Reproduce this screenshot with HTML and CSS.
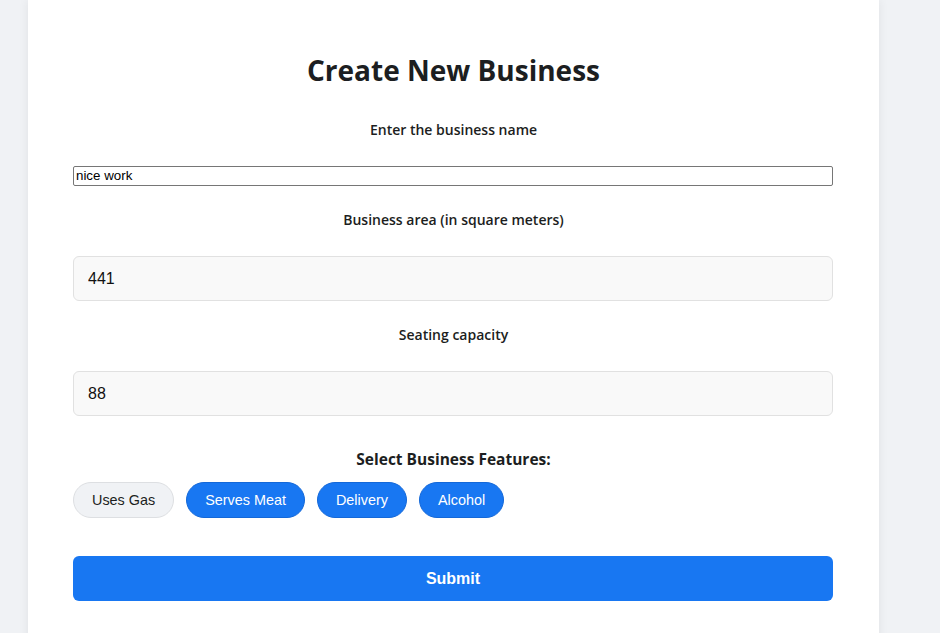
FILE: index.html
```html
<!DOCTYPE html>
<html>
<head>
<meta charset="utf-8">
<link rel="stylesheet" href="styles.css">
</head>
<body>
<div class="page">
  <form class="card">
    <h2 class="title">Create New Business</h2>
    <label class="label">Enter the business name</label>
    <input class="plain-input" type="text" value="nice work">
    <label class="label">Business area (in square meters)</label>
    <input class="field" type="text" value="441">
    <label class="label">Seating capacity</label>
    <input class="field" type="text" value="88">
    <h3 class="features-title">Select Business Features:</h3>
    <div class="chips">
      <button type="button" class="chip">Uses Gas</button>
      <button type="button" class="chip active">Serves Meat</button>
      <button type="button" class="chip active">Delivery</button>
      <button type="button" class="chip active">Alcohol</button>
    </div>
    <button type="button" class="submit">Submit</button>
  </form>
</div>
</body>
</html>
```
FILE: styles.css
```css
html, body {
  margin: 0;
  padding: 0;
  background: #f0f2f5;
  height: 100%;
  overflow: hidden;
}
.page {
  padding-left: 28px;
}
.card {
  width: 851px;
  box-sizing: border-box;
  background: #ffffff;
  box-shadow: 0 0 10px rgba(0, 0, 0, 0.07);
  padding: 53px 45px 40px;
  min-height: 700px;
  display: flex;
  flex-direction: column;
  font-family: "Open Sans", "Noto Sans", sans-serif;
  color: #1c1e21;
}
.title {
  margin: 0 0 33px;
  font-size: 28px;
  line-height: 34px;
  font-weight: 700;
  text-align: center;
}
.label {
  display: block;
  text-align: center;
  font-size: 14px;
  line-height: 20px;
  font-weight: 600;
  margin-bottom: 26px;
}
.plain-input {
  display: block;
  box-sizing: border-box;
  width: 760px;
  height: 20px;
  margin: 0 0 24px;
  padding: 0 2px 1px;
  font-family: "Liberation Sans", Arial, sans-serif;
  font-size: 13.33px;
  color: #000;
  border: 1px solid #767676;
  border-radius: 2px;
  background: #fff;
}
.field {
  display: block;
  box-sizing: border-box;
  width: 760px;
  height: 45px;
  margin: 0 0 24px;
  padding: 0 14px;
  font-family: "Liberation Sans", Arial, sans-serif;
  font-size: 16px;
  color: #111;
  background: #f9f9f9;
  border: 1px solid #e1e1e1;
  border-radius: 6px;
}
.features-title {
  margin: 8px 0 12px;
  text-align: center;
  font-size: 15.5px;
  line-height: 22px;
  font-weight: 700;
}
.chips {
  display: flex;
  gap: 12px;
  margin-bottom: 38px;
}
.chip {
  height: 36px;
  padding: 0 18px;
  border-radius: 18px;
  border: 1px solid #dddfe2;
  background: #f0f2f5;
  color: #1c1e21;
  font-family: "Liberation Sans", Arial, sans-serif;
  font-size: 14.4px;
}
.chip.active {
  background: #1877f2;
  border-color: #1468d8;
  color: #fff;
}
.submit {
  width: 760px;
  height: 45px;
  border: none;
  border-radius: 6px;
  background: #1877f2;
  color: #fff;
  font-family: "Liberation Sans", Arial, sans-serif;
  font-size: 16px;
  font-weight: 700;
}
```
